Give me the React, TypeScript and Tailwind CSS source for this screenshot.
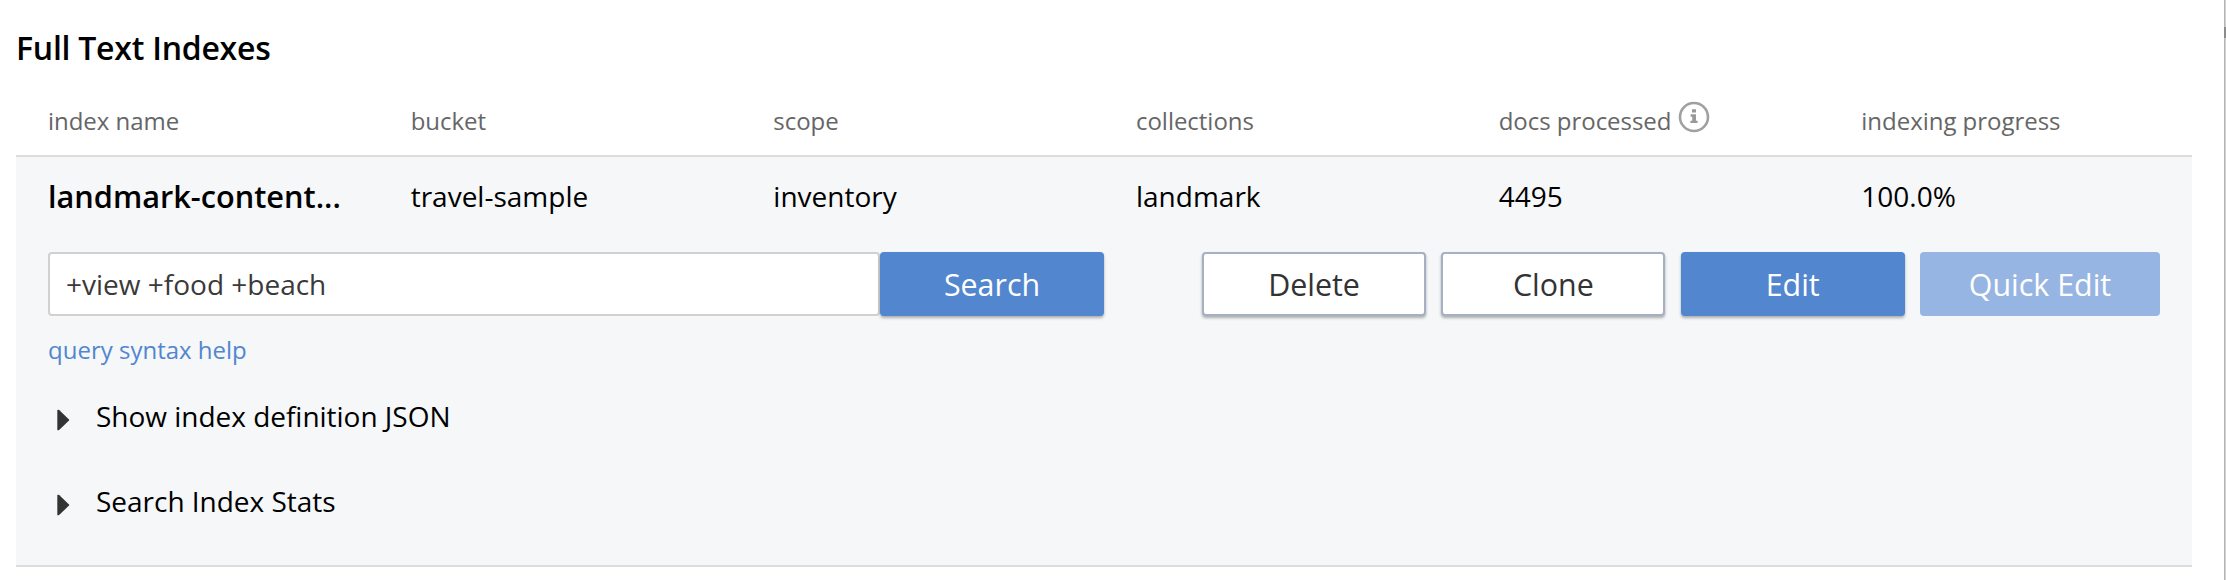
import type { ReactNode } from "react";

const columns = [
  { label: "index name", value: "landmark-content..." },
  { label: "bucket", value: "travel-sample" },
  { label: "scope", value: "inventory" },
  { label: "collections", value: "landmark" },
  { label: "docs processed", value: "4495", info: true },
  { label: "indexing progress", value: "100.0%" },
];

function InfoIcon() {
  return (
    <svg className="ml-[7px] -mt-[8px] size-[32px] shrink-0" viewBox="0 0 32 32" fill="none">
      <circle cx="16" cy="16" r="14" stroke="#a0a0a0" strokeWidth="2.6" />
      <path
        d="M14 8.3h4v3.2h-4zM12.6 13.3h5.4v6.4h1.6v2.4h-7.2v-2.4h1.8v-4h-1.6z"
        fill="#999"
      />
    </svg>
  );
}

function Disclosure({ children }: { children: ReactNode }) {
  return (
    <div className="flex h-[40px] items-center">
      <svg className="mt-[8px] ml-[9px] h-[22px] w-[13px]" viewBox="0 0 13 22">
        <path d="M0.3 1.6Q0.3 0.4 1.5 0.8L2.4 1.3L12 10.4Q12.5 11 12 11.6L2.4 20.7L1.5 21.2Q0.3 21.6 0.3 20.4z" fill="#333" />
      </svg>
      <span className="ml-[26px] text-[28px] leading-[40px] tracking-[-0.02px] text-black">{children}</span>
    </div>
  );
}

const button = "flex h-[64px] items-center justify-center rounded-[4px] pt-px text-[30.4px] leading-[41px]";
const raised = "shadow-[0_2px_3px_rgba(0,0,0,0.3)]";

export default function App() {
  return (
    <div className="flex h-[580px] w-[2226px] overflow-hidden bg-white font-['Open_Sans','Noto_Sans',sans-serif]">
      <main className="w-[2224px] shrink-0 pl-[16px] pt-[28px]">
        <h2 className="text-[32px] leading-[40px] font-semibold tracking-[-0.25px] text-black">Full Text Indexes</h2>
        <section className="w-[2176px]">
          <div className="grid h-[89px] grid-cols-6 border-b-2 border-[#dcdcdc] pt-[37px]">
            {columns.map((c) => (
              <div key={c.label} className="flex h-[32px] items-center pl-[32px] text-[24px] leading-[32px] tracking-[-0.03px] text-[#666]">
                <span>{c.label}</span>
                {c.info && <InfoIcon />}
              </div>
            ))}
          </div>
          <div className="h-[410px] border-b-2 border-[#dcdcdc] bg-[#f5f7f9]">
            <div className="grid h-[95px] grid-cols-6 pt-[19px]">
              {columns.map((c, i) => (
                <div
                  key={c.label}
                  className={
                    i === 0
                      ? "pl-[32px] text-[30.7px] leading-[40px] font-semibold text-black"
                      : "pl-[32px] text-[28px] leading-[40px] text-black"
                  }
                >
                  {c.value}
                </div>
              ))}
            </div>
            <div className="flex h-[64px] pr-[32px] pl-[32px]">
              <input
                className="h-[64px] w-[832px] rounded-[4px] border-2 border-[#d1d1d1] bg-white px-[16px] text-[28px] text-[#3a3a3a] outline-none"
                defaultValue="+view +food +beach"
              />
              <button className={`${button} ${raised} w-[224px] bg-[#5286cf] text-white`}>Search</button>
              <div className="ml-auto flex gap-[15.33px]">
                <button className={`${button} ${raised} w-[224px] border-2 border-[#a5b1c2] bg-white text-[#333]`}>Delete</button>
                <button className={`${button} ${raised} w-[224px] border-2 border-[#a5b1c2] bg-white text-[#333]`}>Clone</button>
                <button className={`${button} ${raised} w-[224px] bg-[#5286cf] text-white`}>Edit</button>
                <button className={`${button} w-[240px] bg-[#96b5e2] text-white`}>Quick Edit</button>
              </div>
            </div>
            <div className="pt-[18px] pl-[32px]">
              <a className="block text-[24px] leading-[32px] text-[#5286cf]">query syntax help</a>
              <div className="flex flex-col gap-[45px] pt-[30px]">
                <Disclosure>Show index definition JSON</Disclosure>
                <Disclosure>Search Index Stats</Disclosure>
              </div>
            </div>
          </div>
        </section>
      </main>
      <div className="w-[2px] shrink-0 border-l border-[#b5b5b5] bg-[#d2d2d2] pt-[27px]">
        <div className="-ml-px h-[11px] w-[2px] bg-[#8c8c8c]" />
      </div>
    </div>
  );
}
